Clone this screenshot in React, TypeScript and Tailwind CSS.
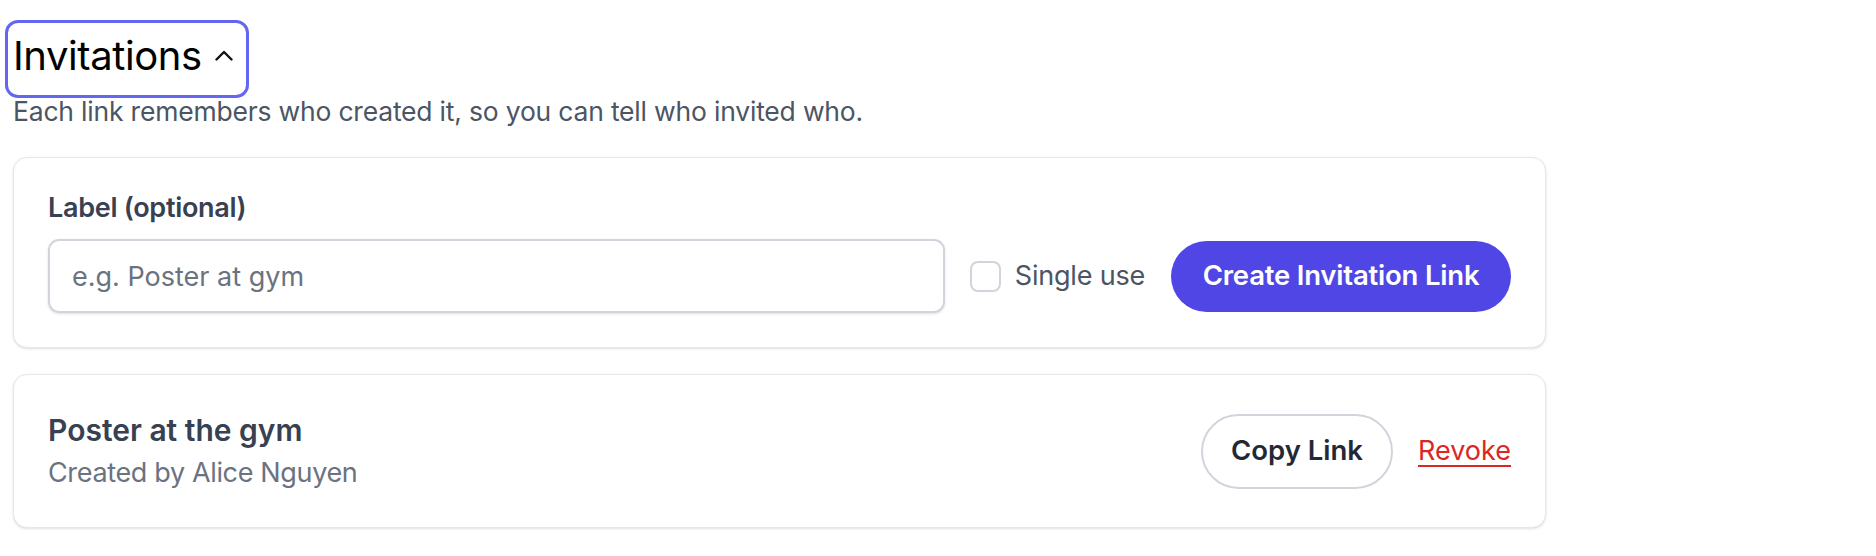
import React, { useState } from 'react';

const font = { fontFamily: '"Inter", "Liberation Sans", sans-serif' };

function ChevronUp() {
  return (
    <svg width="20" height="11" viewBox="0 0 20 11" fill="none" className="shrink-0">
      <path d="M2.5 9.5 L10 2 L17.5 9.5" stroke="#111" strokeWidth="2.4" strokeLinecap="round" strokeLinejoin="round" />
    </svg>
  );
}

export default function App() {
  const [open, setOpen] = useState(true);
  const [label, setLabel] = useState('');
  const [singleUse, setSingleUse] = useState(false);

  return (
    <div className="min-h-screen bg-white px-[13px] text-[#111827]" style={font}>
      <div className="w-[1533px] pt-[20px]">
        {/* section toggle, shown focused */}
        <button
          onClick={() => setOpen(!open)}
          className="-ml-[8px] flex items-center gap-[12px] rounded-[13px] border-[3px] border-[#6366f1] pl-[5px] pr-[12px] pt-[8px] pb-[15px] text-[40px] font-normal leading-[49px] tracking-[-0.4px] text-black"
        >
          Invitations
          <ChevronUp />
        </button>
        <p className="text-[26.5px] leading-[26px] tracking-[-0.2px] text-[#4b5563]">
          Each link remembers who created it, so you can tell who invited who.
        </p>

        {open && (
          <div className="mt-[33px] flex flex-col gap-[26px]">
            <div className="rounded-[14px] border border-[#e5e7eb] bg-white px-[34px] pt-[33px] pb-[34px] shadow-sm">
              <label className="block text-[27px] font-semibold leading-[34px] tracking-[-0.3px] text-[#374151]">Label (optional)</label>
              <div className="mt-[14px] flex items-center">
                <input
                  value={label}
                  onChange={(e) => setLabel(e.target.value)}
                  placeholder="e.g. Poster at gym"
                  className="h-[74px] flex-1 rounded-[11px] border-2 border-[#d1d5db] px-[22px] text-[27px] text-[#111827] shadow-sm outline-none placeholder:text-[#6b7280]"
                />
                <label className="ml-[25px] flex items-center gap-[14px] text-[27px] tracking-[-0.2px] text-[#4b5563]">
                  <span
                    onClick={() => setSingleUse(!singleUse)}
                    className={`h-[31px] w-[31px] rounded-[8px] border-2 ${singleUse ? 'border-[#4f46e5] bg-[#4f46e5]' : 'border-[#d1d5db] bg-white'}`}
                  />
                  Single use
                </label>
                <button className="ml-[26px] h-[71px] w-[340px] rounded-full bg-[#4f46e5] text-[27.5px] font-semibold tracking-[-0.2px] text-white">
                  Create Invitation Link
                </button>
              </div>
            </div>

            <div className="flex h-[154px] items-center justify-between rounded-[14px] border border-[#e5e7eb] bg-white px-[34px] shadow-sm">
              <div>
                <div className="text-[30px] font-semibold leading-[40px] text-[#374151]">Poster at the gym</div>
                <div className="mt-[4px] text-[27px] leading-[38px] tracking-[-0.35px] text-[#6b7280]">Created by Alice Nguyen</div>
              </div>
              <div className="flex items-center gap-[25px]">
                <button className="h-[75px] w-[192px] rounded-full border-2 border-[#d1d5db] bg-white text-[27.5px] font-semibold text-[#1f2937]">
                  Copy Link
                </button>
                <button className="text-[27px] text-[#dc2626] underline decoration-2 underline-offset-[5px]">Revoke</button>
              </div>
            </div>
          </div>
        )}
      </div>
    </div>
  );
}
